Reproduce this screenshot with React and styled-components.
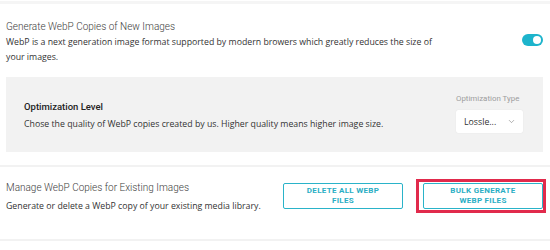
import React, { useState } from 'react';
import styled, { createGlobalStyle } from 'styled-components';
import { ChevronDown } from 'lucide-react';

const GlobalStyle = createGlobalStyle`
    body {
        margin: 0;
        background: #fff;
        font-family: "Open Sans", "Noto Sans", sans-serif;
        color: #333;
    }
`

function App() {
    const [enabled, setEnabled] = useState(true);

    return (
        <Page>
            <GlobalStyle />
            <TopRule />
            <Section $top={16}>
                <Row>
                    <Info>
                        <Title>Generate WebP Copies of New Images</Title>
                        <Text>
                            WebP is a next generation image format supported by modern browers which greatly reduces the size of your images.
                        </Text>
                    </Info>
                    <Toggle $on={enabled} onClick={() => setEnabled(!enabled)}>
                        <Knob $on={enabled} />
                    </Toggle>
                </Row>
                <Panel>
                    <PanelInfo>
                        <PanelTitle>Optimization Level</PanelTitle>
                        <Text $gap={3}>Chose the quality of WebP copies created by us. Higher quality means higher image size.</Text>
                    </PanelInfo>
                    <Field>
                        <FieldLabel>Optimization Type</FieldLabel>
                        <Select>
                            <span>Lossle...</span>
                            <ChevronDown size={9} strokeWidth={1.5} color="#777" />
                        </Select>
                    </Field>
                </Panel>
            </Section>
            <Rule />
            <Section $top={12}>
                <Row>
                    <Info $pad={2}>
                        <Title>Manage WebP Copies for Existing Images</Title>
                        <Text $gap={4}>Generate or delete a WebP copy of your existing media library.</Text>
                    </Info>
                    <Actions>
                        <ActionButton>Delete all WebP files</ActionButton>
                        <Highlight>
                            <ActionButton>Bulk generate WebP files</ActionButton>
                        </Highlight>
                    </Actions>
                </Row>
            </Section>
            <Rule $gap={25} />
        </Page>
    )
}

export default App


const Page = styled.div`
    width: 550px;
    height: 250px;
    overflow: hidden;
    padding-top: 1px;
    box-sizing: border-box;
`

const TopRule = styled.div`
    height: 3px;
    background: #f5f5f5;
`

const Rule = styled.div`
    height: 2px;
    margin-top: ${p => p.$gap || 0}px;
    background: #f2f2f2;
`

const Section = styled.div`
    padding: ${p => p.$top}px 7px 0 6px;
`

const Row = styled.div`
    display: flex;
    align-items: flex-start;
    justify-content: space-between;
`

const Info = styled.div`
    max-width: 440px;
    padding-top: ${p => p.$pad || 0}px;
`

const Title = styled.div`
    font-family: Roboto, sans-serif;
    font-weight: 300;
    font-size: 10px;
    color: #3c3c3c;
    line-height: 14px;
`

const Text = styled.div`
    font-size: 8.75px;
    line-height: 15px;
    color: #333;
    margin-top: ${p => p.$gap ?? 1}px;
`

const Toggle = styled.button`
    width: 21px;
    height: 12px;
    border: none;
    padding: 0;
    border-radius: 6px;
    background: ${p => p.$on ? '#1db4cc' : '#ccc'};
    position: relative;
    cursor: pointer;
    margin-top: 14px;
`

const Knob = styled.span`
    position: absolute;
    top: 2px;
    left: ${p => p.$on ? '11px' : '2px'};
    width: 8px;
    height: 8px;
    border-radius: 50%;
    background: #fff;
`

const Panel = styled.div`
    display: flex;
    align-items: flex-start;
    justify-content: space-between;
    background: #f2f2f2;
    margin-top: 12px;
    margin-bottom: 13px;
    height: 75px;
    box-sizing: border-box;
    padding: 17px 20px 0 18px;
`

const PanelInfo = styled.div`
    padding-top: 6px;
`

const PanelTitle = styled.div`
    font-family: Roboto, sans-serif;
    font-weight: 500;
    font-size: 9.5px;
    line-height: 14px;
    color: #222;
`

const Field = styled.div`
    display: flex;
    flex-direction: column;
`

const FieldLabel = styled.div`
    font-family: Roboto, sans-serif;
    font-size: 7.9px;
    line-height: 10px;
    color: #9d9d9d;
    margin-bottom: 6px;
`

const Select = styled.div`
    display: flex;
    align-items: center;
    justify-content: space-between;
    width: 67px;
    height: 23px;
    box-sizing: border-box;
    background: #fff;
    border-radius: 2px;
    box-shadow: 0 0 1px rgba(0, 0, 0, 0.12);
    padding: 0 7px 0 8px;
    font-size: 8.75px;
    color: #333;
`

const Actions = styled.div`
    display: flex;
    align-items: center;
    gap: 13px;
`

const ActionButton = styled.button`
    width: 120px;
    height: 26px;
    box-sizing: border-box;
    background: #fff;
    border: 1.5px solid #2ab3c9;
    border-radius: 2px;
    color: #2aaec4;
    font-family: Roboto, sans-serif;
    font-weight: 700;
    font-size: 8px;
    letter-spacing: 0.3px;
    line-height: 10px;
    text-transform: uppercase;
    padding: 0 16px;
    cursor: pointer;
`

const Highlight = styled.div`
    display: flex;
    border: 3px solid #e12a4c;
    padding: 1px 0 1px 4px;
    margin-right: -3px;
`
